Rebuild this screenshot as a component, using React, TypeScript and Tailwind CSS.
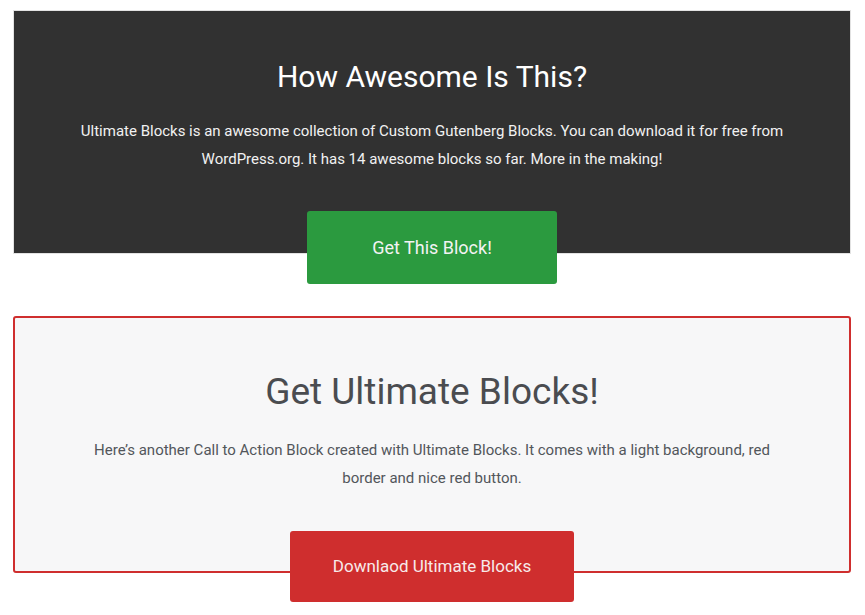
import React from "react";

const ctas = [
  {
    title: "How Awesome Is This?",
    text: "Ultimate Blocks is an awesome collection of Custom Gutenberg Blocks. You can download it for free from WordPress.org. It has 14 awesome blocks so far. More in the making!",
    button: "Get This Block!",
  },
];

export default function App() {
  return (
    <div className="min-h-[615px] bg-white pl-[13px] pr-[14px] pt-[10px] font-['Roboto',sans-serif]">
      {ctas.map((cta) => (
        <div
          key={cta.title}
          className="flex flex-col items-center border border-[#e2e2e2] bg-[#313131] pt-[48px] text-center"
        >
          <h2 className="text-[30px] leading-[36px] text-white">{cta.title}</h2>
          <p className="mt-[22px] w-[710px] text-[15px] leading-[28px] text-[#f1f1f1]">
            {cta.text}
          </p>
          <a
            href="#"
            className="-mb-[31px] mt-[38px] flex h-[73px] w-[250px] items-center justify-center rounded-[3px] bg-[#2b9a3f] text-[18px] text-[#f3f3f3]"
          >
            {cta.button}
          </a>
        </div>
      ))}

      <div className="mt-[62px] flex flex-col items-center rounded-[3px] border-2 border-[#cf2e2e] bg-[#f7f7f8] pt-[51px] text-center">
        <h2 className="text-[37px] leading-[46px] text-[#4a4c50]">Get Ultimate Blocks!</h2>
        <p className="mt-[21px] w-[710px] text-[15px] leading-[28px] text-[#52565b]">
          Here’s another Call to Action Block created with Ultimate Blocks. It comes with a light
          background, red border and nice red button.
        </p>
        <a
          href="#"
          className="-mb-[31px] mt-[39px] flex h-[71px] w-[284px] items-center justify-center rounded-[3px] bg-[#cf2e2e] text-[17px] text-[#f7eaea]"
        >
          Downlaod Ultimate Blocks
        </a>
      </div>
    </div>
  );
}
